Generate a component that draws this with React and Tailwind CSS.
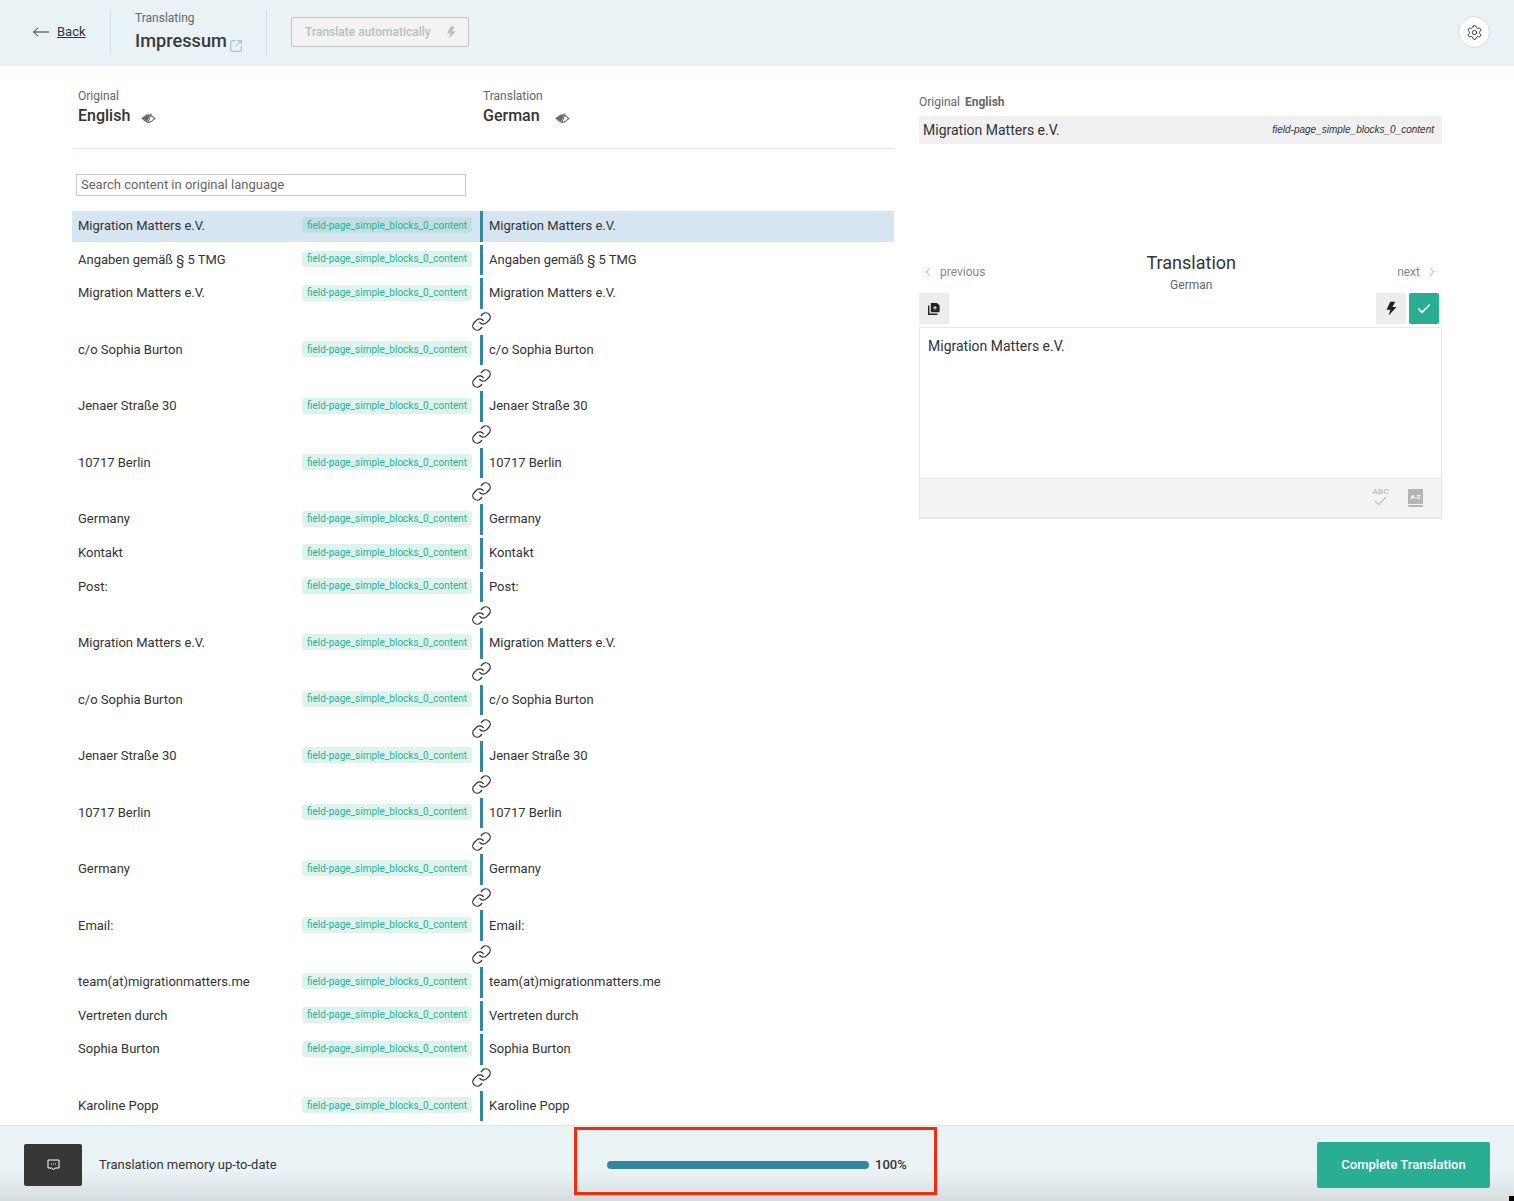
import React from "react";
import { SquareArrowOutUpRight, Settings, Link, Check, ChevronLeft, ChevronRight } from "lucide-react";

const rows = [
  ["Migration Matters e.V.", 0, 1],
  ["Angaben gemäß § 5 TMG", 0],
  ["Migration Matters e.V.", 1],
  ["c/o Sophia Burton", 1],
  ["Jenaer Straße 30", 1],
  ["10717 Berlin", 1],
  ["Germany", 0],
  ["Kontakt", 0],
  ["Post:", 1],
  ["Migration Matters e.V.", 1],
  ["c/o Sophia Burton", 1],
  ["Jenaer Straße 30", 1],
  ["10717 Berlin", 1],
  ["Germany", 1],
  ["Email:", 1],
  ["team(at)migrationmatters.me", 0],
  ["Vertreten durch", 0],
  ["Sophia Burton", 1],
  ["Karoline Popp", 0],
];

function Flash({ className, size = 16 }) {
  return (
    <svg viewBox="0 0 24 24" width={size} height={size} className={className} fill="currentColor">
      <path d="M10 1L4 14H10L7.5 23L20 9.5H13.5L18 1Z" />
    </svg>
  );
}

function EyeSlash() {
  return (
    <svg viewBox="0 0 16 12" width="15" height="11" fill="none" stroke="#666" strokeWidth="1.1" className="ml-[11px] mt-[5px]">
      <path d="M1 6 L6 2.2 Q8 1.6 10 2.2 L15 6 L10.5 9.6 Q8 10.6 6 9.8 Z" />
      <path d="M1.6 6 L6.6 2.4 L9.6 2.2 L6.6 9.4 Z" fill="#666" stroke="none" />
      <path d="M11 0.6 L7 11" />
    </svg>
  );
}

function Row({ text, linked, active }) {
  return (
    <>
      <div className={`flex h-[30.67px] mb-[3px] ${active ? "bg-[#d5e5f1]" : ""}`}>
        <div className="flex w-[408px] items-center justify-between pl-[6px] pr-2 pb-[1px]">
          <span>{text}</span>
          <span className={`flex h-4 w-[170px] items-center justify-center rounded-[3px] text-[10px] text-[#2bb193] mb-[1px] ${active ? "bg-[#bfdfe2]" : "bg-[#dff3ee]"}`}>
            field-page_simple_blocks_0_content
          </span>
        </div>
        <div className="w-[3px] bg-[#35879f]" />
        <div className="flex flex-1 items-center pl-[6px] pb-[1px]">{text}</div>
      </div>
      {linked ? (
        <div className="flex h-[22.83px] w-[820px] items-center justify-start pl-[399px] pb-[3px]">
          <Link size={21} strokeWidth={1.5} className="text-[#333]" />
        </div>
      ) : null}
    </>
  );
}

export default function App() {
  return (
    <div className="relative flex h-[1201px] w-[1514px] flex-col overflow-hidden bg-white font-['Roboto',sans-serif] text-[13px] text-[#333]">
      <header className="flex h-[66px] shrink-0 items-center bg-[#e9f2f5] pb-[2px]">
        <div className="flex w-[110px] items-center pl-[33px]">
          <svg viewBox="0 0 16 10" width="16" height="10" fill="none" stroke="#333" strokeWidth="1">
            <path d="M0.5 5H16M5 0.8L0.7 5L5 9.2" />
          </svg>
          <span className="ml-[8px] underline text-[13px]">Back</span>
        </div>
        <div className="h-[46px] w-px bg-[#cfe2e8]" />
        <div className="w-[155px] pl-6 pb-[2px]">
          <div className="text-xs text-[#666] leading-[14px] mb-[5px]">Translating</div>
          <div className="flex items-end">
            <span className="text-[18.2px] font-medium leading-[21px] text-[#3a3a3a]">Impressum</span>
            <SquareArrowOutUpRight size={14} strokeWidth={1.1} className="ml-[2px] mb-[-2px] text-[#4fa3bf]" />
          </div>
        </div>
        <div className="h-[47px] w-px bg-[#cfe2e8]" />
        <button className="ml-6 flex h-[30px] w-[178px] items-center rounded-[2px] border border-[#c4c4c4] bg-[#f3f3f3] pl-[13px] text-xs font-medium text-[#bdbdbd]">
          Translate automatically
          <Flash size={13} className="ml-[14px] text-[#bdbdbd]" />
        </button>
        <div className="flex-1" />
        <div className="mr-6 flex h-8 w-8 items-center justify-center rounded-full border border-[#c9dfe6] bg-white">
          <Settings size={17} strokeWidth={1.4} className="text-[#333]" />
        </div>
      </header>

      <main className="flex min-h-0 flex-1 overflow-hidden">
        <section className="ml-[72px] w-[822px] shrink-0">
          <div className="flex h-[83px] border-b border-[#d6e6eb] pl-[6px] pt-[24px]">
            <div className="w-[405px]">
              <div className="text-xs leading-[13px] text-[#666]">Original</div>
              <div className="mt-[3px] flex items-center text-base font-medium leading-[19px]">
                English
                <EyeSlash />
              </div>
            </div>
            <div>
              <div className="text-xs leading-[13px] text-[#666]">Translation</div>
              <div className="mt-[3px] flex items-center text-base font-medium leading-[19px]">
                German
                <span className="ml-[4px]" />
                <EyeSlash />
              </div>
            </div>
          </div>
          <div className="ml-[4px] mt-[25px] mb-[15px] flex h-[22px] w-[390px] items-center border border-[#c8c8c8] pl-1 text-[13px] text-[#666]">
            Search content in original language
          </div>
          {rows.map((r, i) => (
            <Row key={i} text={r[0]} linked={r[1]} active={r[2]} />
          ))}
        </section>

        <aside className="ml-[25px] w-[523px] shrink-0 pt-[29px]">
          <div className="flex text-xs leading-[14px] text-[#666]">
            Original <span className="ml-[5px] font-bold">English</span>
          </div>
          <div className="mt-[7px] flex h-7 items-center justify-between bg-[#f0f0f0] pl-1 pr-2 text-sm">
            <span>Migration Matters e.V.</span>
            <span className="font-['Liberation_Sans',sans-serif] text-[10px] italic">field-page_simple_blocks_0_content</span>
          </div>
          <div className="mt-[107px] flex h-[40px] items-start justify-between">
            <div className="flex items-center pl-[2px] pt-[13px] text-xs text-[#888]">
              <ChevronLeft size={14} strokeWidth={1.3} />
              <span className="ml-[5px]">previous</span>
            </div>
            <div className="text-center">
              <div className="text-[18px] leading-[24px]">Translation</div>
              <div className="mt-[3px] text-xs leading-[14px] text-[#666]">German</div>
            </div>
            <div className="flex items-center pr-[3px] pt-[13px] text-xs text-[#888]">
              <span className="mr-[5px]">next</span>
              <ChevronRight size={14} strokeWidth={1.3} />
            </div>
          </div>
          <div className="mt-[2px] flex h-[31px] items-stretch pr-[3px]">
            <div className="flex w-[30px] items-center justify-center rounded-[2px] bg-[#ededed]">
              <svg viewBox="0 0 12 12" width="12" height="12">
                <path d="M0 2.5V12H9.5V10.6H1.4V2.5Z" fill="#222" />
                <path d="M2.8 0H9L11.6 2.6V9.2H2.8Z" fill="#222" />
                <path d="M7 3V6.6M5.2 4.8H8.8" stroke="#ededed" strokeWidth="1" />
              </svg>
            </div>
            <div className="flex-1" />
            <div className="flex w-[30px] items-center justify-center rounded-[2px] bg-[#ededed]">
              <Flash size={15} className="text-[#222]" />
            </div>
            <div className="ml-[3px] flex w-[30px] items-center justify-center rounded-[2px] bg-[#2aae93]">
              <Check size={16} strokeWidth={2.5} className="text-white" />
            </div>
          </div>
          <div className="mt-[3px] border border-b-2 border-[#e8e8e8] bg-white">
            <div className="h-[150px] pl-2 pt-[7.5px] text-sm">Migration Matters e.V.</div>
            <div className="flex h-[39px] items-center justify-end border-t border-[#e8e8e8] bg-[#f3f3f3] pr-[18px]">
              <div className="mr-[19px] flex flex-col items-center text-[8px] font-bold leading-[8px] tracking-[0.3px] text-[#c2c2c2]">
                ABC
                <Check size={15} strokeWidth={2.2} className="-mt-[2px]" />
              </div>
              <div className="flex h-[18px] w-[15px] flex-col overflow-hidden rounded-[1px] bg-[#b5b5b5] text-[6px] font-bold text-white">
                <div className="flex flex-1 items-center justify-center">A-Z</div>
                <div className="mb-[2px] h-px bg-[#f3f3f3]" />
              </div>
            </div>
          </div>
        </aside>
      </main>

      <footer className="flex h-[76px] shrink-0 border-t border-[#dce8ee] bg-gradient-to-b from-[#e9f2f5] from-60% to-[#d6dddf]">
        <div className="flex w-[574px] items-center pl-6 pt-[2px]">
          <div className="flex h-[42px] w-[58px] items-center justify-center rounded-[2px] bg-[#363636]">
            <svg viewBox="0 0 13 12" width="13" height="12" fill="none" stroke="#fff" strokeWidth="1">
              <path d="M1 1H12V9H8L6.5 10.8L5 9H1Z" />
              <path d="M4 5H5M6 5H7M8 5H9" />
            </svg>
          </div>
          <span className="ml-[17px]">Translation memory up-to-date</span>
        </div>
        <div className="mt-[1px] flex h-[68px] w-[363px] items-center border-[3px] border-[#f32b0d] pl-[30px] pt-[7px]">
          <div className="h-2 w-[262px] rounded-full bg-[#35879f]" />
          <span className="ml-[6px] text-[13px] font-medium">100%</span>
        </div>
        <div className="flex flex-1 items-center justify-end pr-6 pt-[2px]">
          <button className="h-[46px] w-[173px] rounded-[2px] bg-[#2aae93] text-[13px] font-medium text-white">
            Complete Translation
          </button>
        </div>
      </footer>
      <div className="absolute bottom-0 right-0 h-[5px] w-[5px] bg-black" />
    </div>
  );
}
